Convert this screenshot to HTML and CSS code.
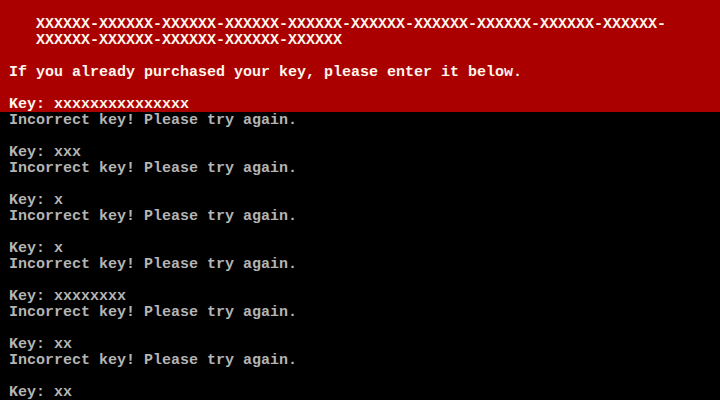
FILE: index.html
```html
<html>
<head>
    <link rel="stylesheet" href="styles.css">
</head>
<body>
    <div class="screen">
        <div class="banner">
            <div class="line"> </div>
            <div class="line">   XXXXXX-XXXXXX-XXXXXX-XXXXXX-XXXXXX-XXXXXX-XXXXXX-XXXXXX-XXXXXX-XXXXXX-</div>
            <div class="line">   XXXXXX-XXXXXX-XXXXXX-XXXXXX-XXXXXX</div>
            <div class="line"> </div>
            <div class="line">If you already purchased your key, please enter it below.</div>
            <div class="line"> </div>
            <div class="line">Key: xxxxxxxxxxxxxxx</div>
        </div>
        <div class="console">
            <div class="line">Incorrect key! Please try again.</div>
            <div class="line"> </div>
            <div class="line">Key: xxx</div>
            <div class="line">Incorrect key! Please try again.</div>
            <div class="line"> </div>
            <div class="line">Key: x</div>
            <div class="line">Incorrect key! Please try again.</div>
            <div class="line"> </div>
            <div class="line">Key: x</div>
            <div class="line">Incorrect key! Please try again.</div>
            <div class="line"> </div>
            <div class="line">Key: xxxxxxxx</div>
            <div class="line">Incorrect key! Please try again.</div>
            <div class="line"> </div>
            <div class="line">Key: xx</div>
            <div class="line">Incorrect key! Please try again.</div>
            <div class="line"> </div>
            <div class="line">Key: xx</div>
        </div>
    </div>
</body>
</html>
```

FILE: styles.css
```css
body {
    margin: 0;
    background: #000000;
}

.screen {
    width: 720px;
    height: 400px;
    overflow: hidden;
    font-family: "Liberation Mono", "DejaVu Sans Mono", monospace;
    font-size: 15px;
    font-weight: bold;
    line-height: 16px;
}

.banner {
    background: #ab0000;
    color: #fff6ec;
}

.console {
    background: #000000;
    color: #b4b4b4;
}

.line {
    height: 15px;
    padding-top: 1px;
    padding-left: 9px;
    white-space: pre;
}
```
